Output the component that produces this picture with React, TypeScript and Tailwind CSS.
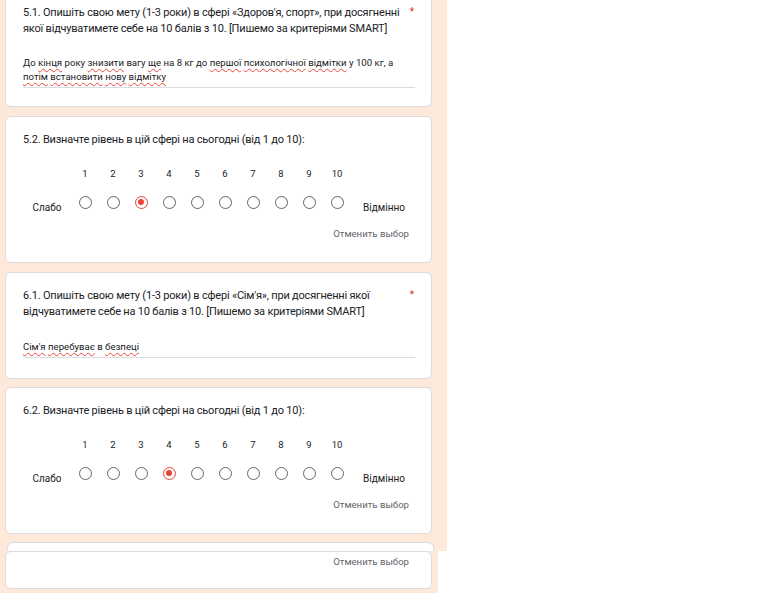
import React from 'react';

const Sp = ({ children }: { children: React.ReactNode }) => (
  <span className="underline decoration-wavy decoration-[#e8453c] decoration-[1px] underline-offset-[2px]">{children}</span>
);

const Radio = ({ checked }: { checked?: boolean }) => (
  <span
    className={`w-[13px] h-[13px] rounded-full border-[1.5px] flex items-center justify-center ${
      checked ? 'border-[#ea4335]' : 'border-[#5f6368]'
    }`}
  >
    {checked && <span className="w-[6px] h-[6px] rounded-full bg-[#ea4335]" />}
  </span>
);

const Card = ({ className, children }: { className?: string; children: React.ReactNode }) => (
  <div className={`bg-white border border-[#dadce0] rounded-[6px] w-[427px] shrink-0 ${className ?? ''}`}>{children}</div>
);

const titleCls = 'text-[11px] tracking-[-0.2px] leading-[16px] text-[#202124]';

const Scale = ({ title, value }: { title: string; value: number }) => (
  <Card className="h-[147px] pt-[15px] pl-[17px] pr-[8px]">
    <div className={titleCls}>{title}</div>
    <div className="flex mt-[20px]">
      <div className="w-[48px] shrink-0 flex flex-col items-center">
        <div className="h-[12px]" />
        <div className="h-[22px] mt-[12px] flex items-end text-[10px] leading-[12px] text-[#202124]">Слабо</div>
      </div>
      {Array.from({ length: 10 }, (_, i) => (
        <div key={i} className="w-[28px] shrink-0 flex flex-col items-center">
          <div className="h-[12px] text-[9.5px] leading-[12px] text-[#202124]">{i + 1}</div>
          <div className="h-[20px] mt-[12px] flex items-center">
            <Radio checked={i + 1 === value} />
          </div>
        </div>
      ))}
      <div className="w-[66px] shrink-0 flex flex-col items-center">
        <div className="h-[12px]" />
        <div className="h-[22px] mt-[12px] flex items-end text-[10px] leading-[12px] text-[#202124]">Відмінно</div>
      </div>
    </div>
    <div className="flex justify-end mt-[13px] pr-[14px] text-[9.6px] leading-[14px] text-[#5f6368]">Отменить выбор</div>
  </Card>
);

const Star = () => <span className="text-[10px] leading-[14px] text-[#d93025] pr-[1px]">*</span>;

export default function App() {
  return (
    <div className="w-[768px] h-[593px] bg-white overflow-hidden font-['Roboto',sans-serif]">
      <div className="w-[447px] h-[551px] bg-[#fde8d9] pl-[5px] flex flex-col overflow-hidden">
        <Card className="h-[107px] border-t-0 rounded-t-none pt-[5px] pl-[17px] pr-[16px]">
          <div className="flex">
            <div className={`flex-1 whitespace-nowrap ${titleCls}`}>
              5.1. Опишіть свою мету (1-3 роки) в сфері «Здоров'я, спорт», при досягненні
              <br />
              якої відчуватимете себе на 10 балів з 10. [Пишемо за критеріями SMART]
            </div>
            <Star />
          </div>
          <div className="mt-[19px] pb-[3px] border-b border-[#dadce0] text-[9.6px] leading-[14px] text-[#202124] whitespace-nowrap">
            До <Sp>кінця</Sp> року <Sp>знизити</Sp> вагу <Sp>ще</Sp> на 8 кг до <Sp>першої</Sp> <Sp>психологічної</Sp>{' '}
            <Sp>відмітки</Sp> у 100 кг, а
            <br />
            <Sp>потім</Sp> <Sp>встановити</Sp> <Sp>нову</Sp> <Sp>відмітку</Sp>
          </div>
        </Card>
        <div className="mt-[9px]">
          <Scale title="5.2. Визначте рівень в цій сфері на сьогодні (від 1 до 10):" value={3} />
        </div>
        <div className="mt-[9px]">
          <Card className="h-[107px] pt-[15px] pl-[17px] pr-[16px]">
            <div className="flex">
              <div className={`flex-1 whitespace-nowrap ${titleCls}`}>
                6.1. Опишіть свою мету (1-3 роки) в сфері «Сім'я», при досягненні якої
                <br />
                відчуватимете себе на 10 балів з 10. [Пишемо за критеріями SMART]
              </div>
              <Star />
            </div>
            <div className="mt-[20px] pb-[3px] border-b border-[#dadce0] text-[9.6px] leading-[14px] text-[#202124]">
              <Sp>Сім'я</Sp> <Sp>перебуває</Sp> в <Sp>безпеці</Sp>
            </div>
          </Card>
        </div>
        <div className="mt-[8px]">
          <Scale title="6.2. Визначте рівень в цій сфері на сьогодні (від 1 до 10):" value={4} />
        </div>
        <div className="mt-[8px]">
          <Card className="h-[20px] ml-[2px] w-[423px]">
            <div />
          </Card>
        </div>
      </div>
      <div className="w-[438px] h-[42px] bg-[#fde8d9] pl-[5px]">
        <Card className="h-[38px] pr-[22px] pt-[3px]">
          <div className="flex justify-end text-[9.6px] leading-[14px] text-[#5f6368]">Отменить выбор</div>
        </Card>
      </div>
    </div>
  );
}
